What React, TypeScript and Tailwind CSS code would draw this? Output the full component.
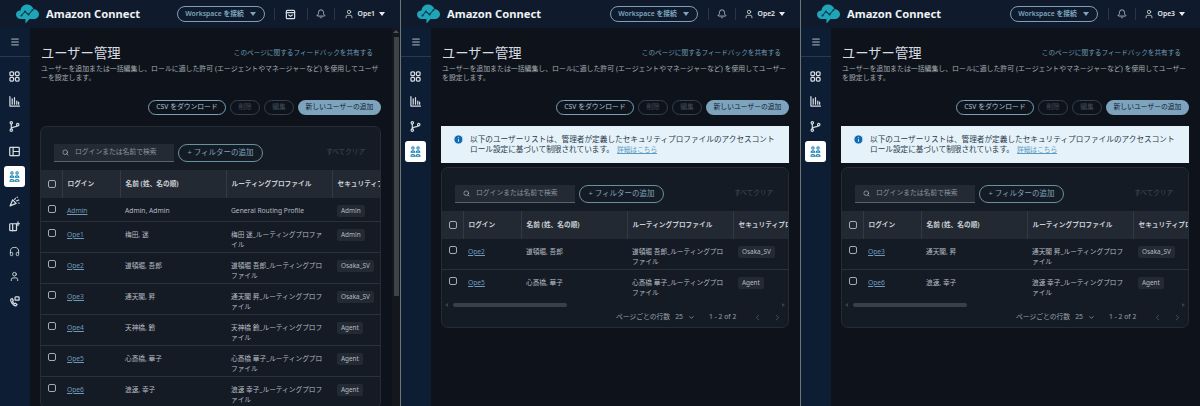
import { Bell, ChevronDown, ChevronLeft, ChevronRight, Headphones, Info, Menu, Search, User } from "lucide-react";
import type { ReactNode } from "react";

type Row = { login: string; name: string; profile: string; tag: string };

const allRows: Row[] = [
  { login: "Admin", name: "Admin, Admin", profile: "General Routing Profile", tag: "Admin" },
  { login: "Ope1", name: "梅田, 迷", profile: "梅田 迷_ルーティングプロファイル", tag: "Admin" },
  { login: "Ope2", name: "道頓堀, 吾郎", profile: "道頓堀 吾郎_ルーティングプロファイル", tag: "Osaka_SV" },
  { login: "Ope3", name: "通天閣, 昇", profile: "通天閣 昇_ルーティングプロファイル", tag: "Osaka_SV" },
  { login: "Ope4", name: "天神橋, 鈴", profile: "天神橋 鈴_ルーティングプロファイル", tag: "Agent" },
  { login: "Ope5", name: "心斎橋, 華子", profile: "心斎橋 華子_ルーティングプロファイル", tag: "Agent" },
  { login: "Ope6", name: "浪速, 幸子", profile: "浪速 幸子_ルーティングプロファイル", tag: "Agent" },
];

function Logo() {
  return (
    <svg width="23" height="20" viewBox="0 0 23 20" className="shrink-0">
      <path
        d="M5 15C2 15 0 13 0 10.5C0 8 2 6.5 4.5 6.5C5 3 7.5.5 11 .5C14 .5 16.5 2.5 17.5 5.2C20.5 5.2 23 7.3 23 10.2C23 13 20.5 15 18 15H13.5L9.5 19.5V15Z"
        fill="#1fa5b8"
      />
      <path d="M5.5 11.5L9 7.5L12.5 10.5L16.5 6" fill="none" stroke="#0f3b4c" strokeWidth="1.1" />
      <circle cx="5.5" cy="11.5" r="1" fill="#0f3b4c" />
      <circle cx="9" cy="7.5" r="1" fill="#0f3b4c" />
      <circle cx="12.5" cy="10.5" r="1" fill="#0f3b4c" />
      <circle cx="16.5" cy="6" r="1" fill="#0f3b4c" />
    </svg>
  );
}

function Glyph({ children, color = "#d5dbe1", weight = 1.35 }: { children: ReactNode; color?: string; weight?: number }) {
  return (
    <svg width="11" height="11" viewBox="0 0 12 12" fill="none" stroke={color} strokeWidth={weight} strokeLinecap="round" strokeLinejoin="round">
      {children}
    </svg>
  );
}

const GridIcon = () => (
  <Glyph>
    <rect x="1" y="1" width="4" height="4" rx="1.2" />
    <rect x="7" y="1" width="4" height="4" rx="1.2" />
    <rect x="1" y="7" width="4" height="4" rx="1.2" />
    <rect x="7" y="7" width="4" height="4" rx="1.2" />
  </Glyph>
);
const ChartIcon = () => (
  <Glyph>
    <path d="M1 .8V11H11.5M3.5 9V3M6 9V1.8M8.5 9V5.5M10.5 9V6.8" />
  </Glyph>
);
const BranchIcon = () => (
  <Glyph>
    <circle cx="2.5" cy="2" r="1.3" />
    <circle cx="2.5" cy="10" r="1.3" />
    <circle cx="9.5" cy="4" r="1.3" />
    <path d="M2.5 3.4V8.6M2.8 8C3.5 6 8 7 9 5.3" />
  </Glyph>
);
const TableIcon = () => (
  <Glyph>
    <rect x=".8" y="1.5" width="10.4" height="9" rx=".8" />
    <path d="M4.5 1.5V10.5M4.5 6H11.2" />
  </Glyph>
);
const PeopleIcon = ({ color }: { color: string }) => (
  <Glyph color={color} weight={1.1}>
    <circle cx="3.2" cy="2.2" r="1.3" />
    <circle cx="8.8" cy="2.2" r="1.3" />
    <path d="M1.2 6.5C1.2 4.6 5.2 4.6 5.2 6.5V6.8H1.2ZM6.8 6.5C6.8 4.6 10.8 4.6 10.8 6.5V6.8H6.8Z" />
    <path d="M1 11.3C1 8.6 5.4 8.6 5.4 11.3ZM6.6 11.3C6.6 8.6 11 8.6 11 11.3Z" />
  </Glyph>
);
const WandIcon = () => (
  <Glyph>
    <path d="M1.2 10.8L4 4.2L7.8 8Z" />
    <path d="M6.2 3.8L7 2.5M8.4 5.3L10.6 4.4M9 1.3V1.5M10.8 7.6V7.8" />
  </Glyph>
);
const QueueIcon = () => (
  <Glyph>
    <rect x=".8" y="3" width="7.4" height="7.5" rx=".8" />
    <path d="M4 3V10.5M9.8 1V5M7.9 3H11.5" />
  </Glyph>
);
const PhoneIcon = () => (
  <Glyph>
    <path d="M2 3.5C1 5 3.8 10.3 7.6 10.8L8.8 9.2L6.9 7.8L6 8.4C5 7.8 4.2 6.8 3.9 5.6L4.7 4.7L3.5 2.7Z" />
    <rect x="6.6" y="1" width="4.4" height="3.6" rx=".6" />
  </Glyph>
);
const InboxIcon = () => (
  <Glyph>
    <rect x="1.5" y="1.5" width="9" height="9" rx="1" />
    <path d="M1.5 4H10.5M4 6.5L6 8L8 6.5" />
  </Glyph>
);

function Caret({ color = "#e5e9ed" }: { color?: string }) {
  return <span className="h-0 w-0 border-x-[3.5px] border-t-[4.5px] border-x-transparent" style={{ borderTopColor: color }} />;
}

function TopBar({ user, inbox }: { user: string; inbox: boolean }) {
  return (
    <div className="flex h-[28px] shrink-0 items-center bg-[#0f1b2c] pl-[16px] pr-[15px]">
      <Logo />
      <span className="ml-[7px] text-[11.2px] font-bold text-[#eef1f4]">Amazon Connect</span>
      <div className="ml-auto flex h-[16px] w-[88px] items-center justify-center gap-[6px] rounded-full border border-[#7d9fb8] text-[6.8px] font-semibold text-[#7fa3bf]">
        Workspace を接続
        <Caret color="#7fa3bf" />
      </div>
      {inbox && (
        <div className="ml-[9px] flex h-[12px] w-[33px] items-center justify-center border-l border-[#2a3645]">
          <InboxIcon />
        </div>
      )}
      <div className={`flex h-[12px] w-[28px] items-center justify-center border-x border-[#2a3645] ${inbox ? "" : "ml-[10px]"}`}>
        <Bell size={10} color="#d5dbe1" strokeWidth={1.8} />
      </div>
      <div className={`flex items-center gap-[4px] text-[6.8px] font-semibold text-[#e5e9ed] ${inbox ? "ml-[9px]" : "ml-[8px]"}`}>
        <User size={10} strokeWidth={1.8} />
        <span>{user}</span>
        <Caret />
      </div>
    </div>
  );
}

function SideIcon({ children, active }: { children: ReactNode; active?: boolean }) {
  return (
    <div className={`mx-[4px] flex h-[21px] w-[21px] items-center justify-center rounded-[3px] ${active ? "bg-white" : ""}`}>{children}</div>
  );
}

function Sidebar({ full }: { full: boolean }) {
  return (
    <div className="flex w-[30px] shrink-0 flex-col bg-[#0d1e34]">
      <div className="flex h-[29px] shrink-0 items-center justify-center border-b border-[#2a3949]">
        <Menu size={10} color="#d5dbe1" strokeWidth={2} />
      </div>
      <div className="flex flex-col gap-[4px] pt-[9px]">
        <SideIcon>
          <GridIcon />
        </SideIcon>
        <SideIcon>
          <ChartIcon />
        </SideIcon>
        <SideIcon>
          <BranchIcon />
        </SideIcon>
        {full && (
          <SideIcon>
            <TableIcon />
          </SideIcon>
        )}
        <SideIcon active>
          <PeopleIcon color="#0f7fa8" />
        </SideIcon>
        {full && (
          <>
            <SideIcon>
              <WandIcon />
            </SideIcon>
            <SideIcon>
              <QueueIcon />
            </SideIcon>
            <SideIcon>
              <Headphones size={11} color="#d5dbe1" strokeWidth={2} />
            </SideIcon>
            <SideIcon>
              <User size={11} color="#d5dbe1" strokeWidth={2} />
            </SideIcon>
            <SideIcon>
              <PhoneIcon />
            </SideIcon>
          </>
        )}
      </div>
    </div>
  );
}

function Checkbox() {
  return <span className="block h-[8px] w-[8px] rounded-[2px] border border-[#a3abb3]" />;
}

function HeadCell({ children }: { children?: ReactNode }) {
  return <div className="flex items-center overflow-hidden whitespace-nowrap border-l border-[#333a44] pl-[4.5px]">{children}</div>;
}

function UserTable({ rows, footer }: { rows: Row[]; footer: boolean }) {
  return (
    <div className="rounded-[7px] border border-[#252c36] bg-[#151b25]">
      <div className="flex items-start pb-[8px] pl-[13px] pr-[14px] pt-[17px]">
        <div className="flex h-[18px] w-[120px] items-center gap-[5px] border-b border-[#5a626c] bg-[#232a34] pl-[8px] text-[6.8px] text-[#8b949e]">
          <Search size={7} color="#b7bec5" strokeWidth={2.2} />
          <span className="ml-[1px]">ログインまたは名前で検索</span>
        </div>
        <div className="ml-[4px] flex h-[18px] w-[85px] items-center justify-center rounded-full border border-[#66929f] text-[7.5px] text-[#7fa3bf]">
          + フィルターの追加
        </div>
        <span className="ml-auto mr-[1px] mt-[3px] text-[6.6px] text-[#3f4c5a]">すべてクリア</span>
      </div>

      <div className="grid h-[28px] grid-cols-[21px_58px_106px_106px_1fr] bg-[#222932] text-[6.7px] font-bold text-[#c9ced4]">
        <div className="flex items-center pl-[7px]">
          <Checkbox />
        </div>
        <HeadCell>ログイン</HeadCell>
        <HeadCell>名前 (姓、名の順)</HeadCell>
        <HeadCell>ルーティングプロファイル</HeadCell>
        <HeadCell>セキュリティプロファイル</HeadCell>
      </div>

      {rows.map((row, i) => (
        <div
          key={row.login}
          className={`grid grid-cols-[21px_58px_106px_106px_1fr] border-[#2a313b] text-[6.7px] leading-[10px] text-[#b4bac1] ${
            row.login === "Admin" ? "h-[24px]" : "h-[31px]"
          } ${footer && i === rows.length - 1 ? "" : "border-b"}`}
        >
          <div className="pl-[7px] pt-[7px]">
            <Checkbox />
          </div>
          <div className="pl-[5px] pt-[8px] text-[#6d9ab8] underline">{row.login}</div>
          <div className="pl-[5px] pt-[8px]">{row.name}</div>
          <div className="pl-[5px] pr-[8px] pt-[8px]">{row.profile}</div>
          <div className="pl-[5px] pt-[7px]">
            <span className="inline-flex h-[12px] items-center rounded-[2px] bg-[#232a34] px-[4px] text-[6.4px] text-[#b4bac1]">{row.tag}</span>
          </div>
        </div>
      ))}

      {footer && (
        <>
          <div className="flex h-[7px] items-center px-[3px]">
            <span className="h-0 w-0 border-y-[2px] border-r-[3px] border-y-transparent border-r-[#3a4048]" />
            <span className="ml-[5px] h-[4px] w-[114px] rounded-full bg-[#3a4048]" />
            <span className="ml-auto h-0 w-0 border-y-[2px] border-l-[3px] border-y-transparent border-l-[#3a4048]" />
          </div>
          <div className="flex h-[19px] items-center pb-[1px] pl-[174px] text-[6.8px] text-[#9aa2aa]">
            <span>ページごとの行数</span>
            <span className="ml-[5px]">25</span>
            <ChevronDown size={7} className="ml-[5px]" strokeWidth={2.4} />
            <span className="ml-[14px]">1 - 2 of 2</span>
            <ChevronLeft size={9} className="ml-[17px] text-[#59626c]" />
            <ChevronRight size={9} className="ml-[11px] text-[#59626c]" />
          </div>
        </>
      )}
    </div>
  );
}

function Panel({ user, rows, full }: { user: string; rows: Row[]; full: boolean }) {
  return (
    <div className={`flex h-[406px] flex-col overflow-hidden ${full ? "w-[400px]" : "w-[399px]"}`}>
      <TopBar user={user} inbox={full} />
      <div className="flex min-h-0 flex-1">
        <Sidebar full={full} />
        <div className="flex min-w-0 flex-1 bg-[#0e131b]">
          <div className="min-w-0 flex-1 pl-[10px] pr-[11px]">
            <div className="flex items-center justify-between pl-[1px] pr-[8px] pt-[16px]">
              <h1 className="text-[13.3px] leading-[18px] text-[#d9dde1]">ユーザー管理</h1>
              <a className="text-[6.65px] leading-[10px] text-[#6d9ab8]">このページに関するフィードバックを共有する</a>
            </div>
            <p className="mt-[2px] pl-[1px] pr-[2px] text-[6.9px] leading-[9px] text-[#a4abb2]">
              ユーザーを追加または一括編集し、ロールに適した許可 (エージェントやマネージャーなど) を使用してユーザーを設定します。
            </p>
            <div className="mt-[18px] flex h-[15px] justify-end gap-[4px] text-[6.8px]">
              <span className="flex w-[78px] items-center justify-center rounded-full border border-[#7a9fb8] text-[#a8c3d6]">CSV をダウンロード</span>
              <span className="flex w-[30px] items-center justify-center rounded-full border border-[#34404c] text-[#3f4c5a]">削除</span>
              <span className="flex w-[30px] items-center justify-center rounded-full border border-[#34404c] text-[#3f4c5a]">編集</span>
              <span className="flex w-[83px] items-center justify-center rounded-full bg-[#7da3bd] text-[#11202e]">新しいユーザーの追加</span>
            </div>
            {!full && (
              <div className="mt-[11px] flex h-[37px] gap-[5px] bg-[#e6f2fa] pl-[12px] pr-[10px] pt-[8px] text-[7.65px] leading-[10px] text-[#2a3a4c]">
                <Info size={11} fill="#0f6cb0" color="#e6f2fa" strokeWidth={2} className="shrink-0" />
                <p className="pl-[1px]">
                  以下のユーザーリストは、管理者が定義したセキュリティプロファイルのアクセスコントロール設定に基づいて制限されています。
                  <span className="ml-[3px] text-[6.7px] text-[#5c9ac4] underline">詳細はこちら</span>
                </p>
              </div>
            )}
            <div className={full ? "mt-[11px]" : "mt-[4px]"}>
              <UserTable rows={rows} footer={!full} />
            </div>
          </div>
          {full && (
            <div className="flex w-[8px] shrink-0 flex-col items-center bg-[#14181e] pt-[2px]">
              <span className="h-0 w-0 border-x-[3px] border-b-[3px] border-x-transparent border-b-[#4e5359]" />
              <span className="mt-[4px] h-[259px] w-[5px] bg-[#3e4348]" />
            </div>
          )}
        </div>
      </div>
    </div>
  );
}

export default function App() {
  return (
    <div className="flex h-[406px] w-[1200px] overflow-hidden bg-[#0e131b] font-['Noto_Sans','Noto_Sans_CJK_JP',sans-serif]">
      <Panel user="Ope1" rows={allRows} full />
      <div className="w-px shrink-0 bg-[#6f7479]" />
      <Panel user="Ope2" rows={[allRows[2], allRows[5]]} full={false} />
      <div className="w-px shrink-0 bg-[#6f7479]" />
      <Panel user="Ope3" rows={[allRows[3], allRows[6]]} full={false} />
    </div>
  );
}
